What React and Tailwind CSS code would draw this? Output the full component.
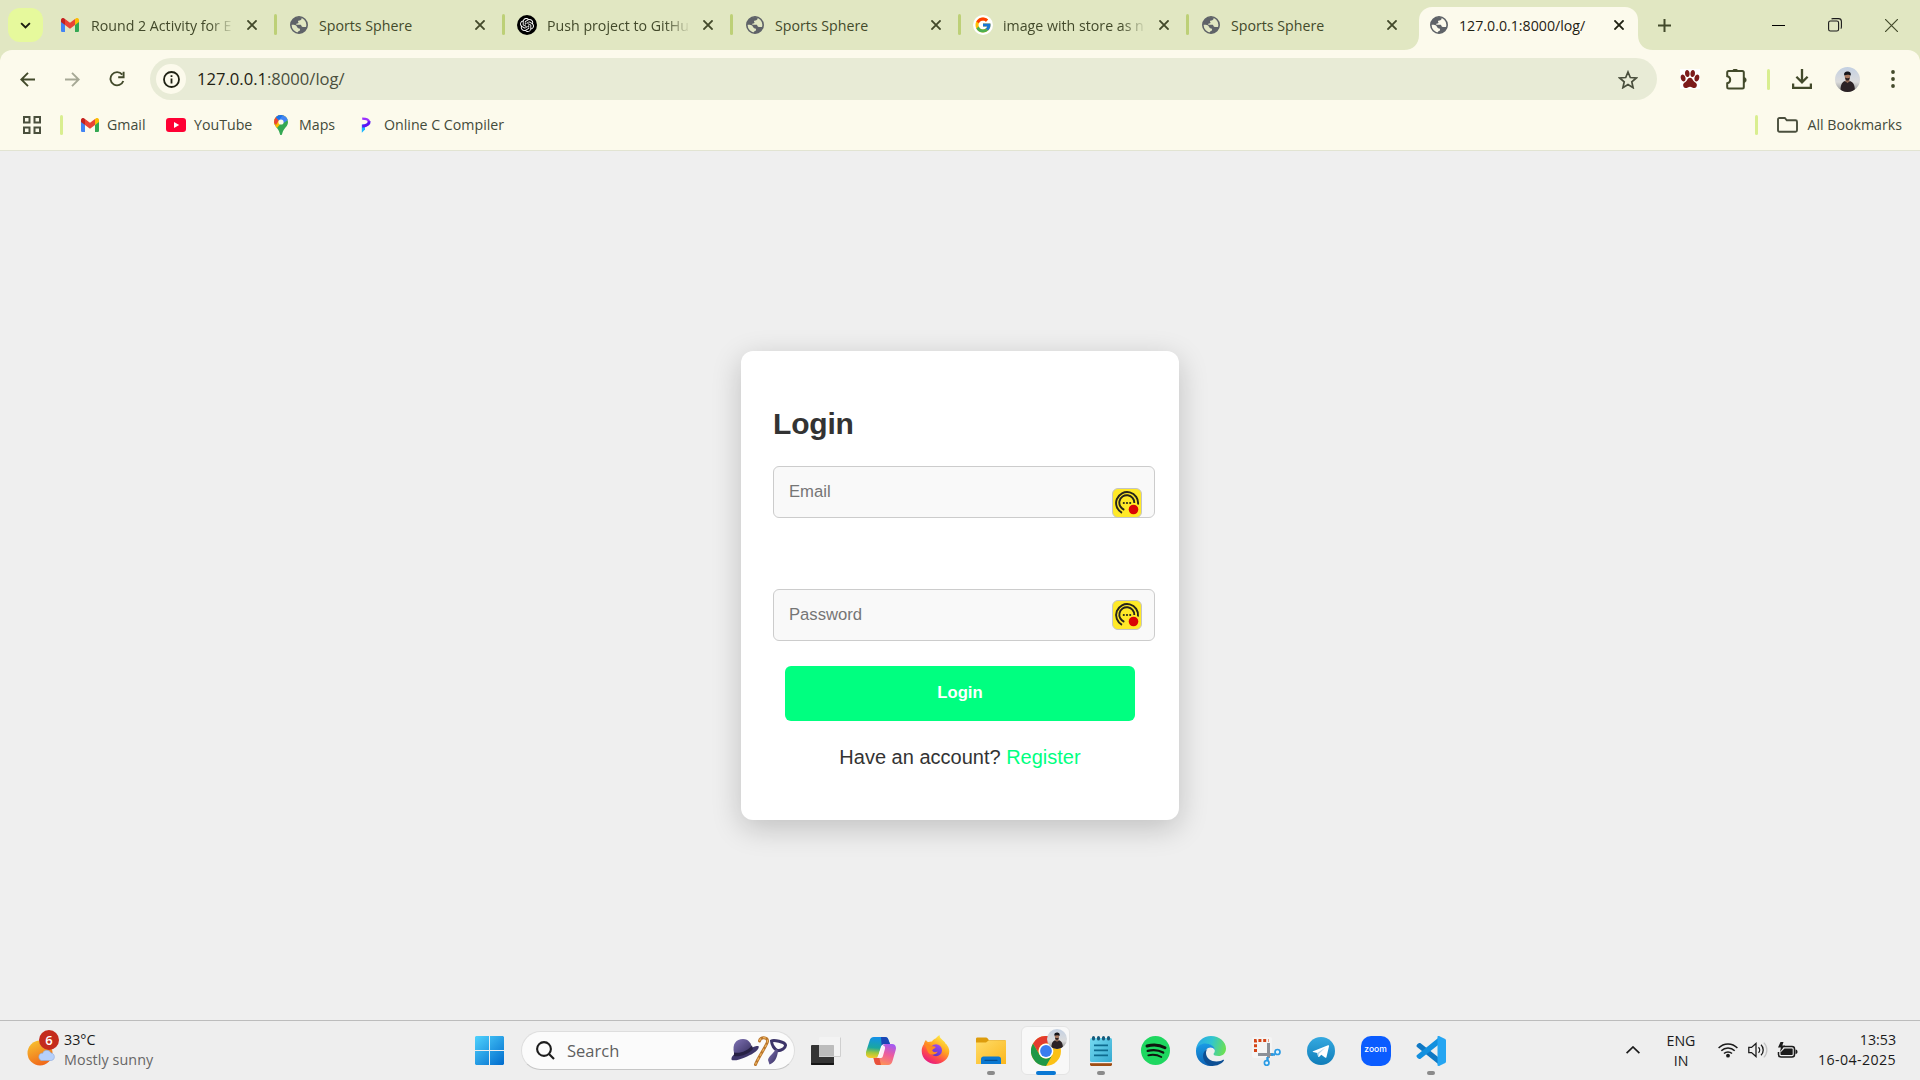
import React from "react";
import { FcGoogle } from "react-icons/fc";
import { SiOpenai } from "react-icons/si";
import { IoPaw } from "react-icons/io5";

const ui = "font-['Open_Sans','Noto_Sans',sans-serif]";

function Gmail({ className = "" }) {
  return (
    <svg viewBox="0 0 18 14" className={`h-[14px] w-[18px] ${className}`}>
      <path d="M0 2.5v10.2c0 .7.6 1.3 1.3 1.3H4V6.500Z" fill="#4285f4" />
      <path d="M18 2.500v10.200c0 .7-.6 1.300-1.300 1.300H14V6.500Z" fill="#34a853" />
      <path d="M14 1v6L18 4V2c0-1.800-2-2.600-3.300-1.600Z" fill="#fbbc04" />
      <path d="M4 7V1l5 3.800L14 1v6l-5 3.800Z" fill="#ea4335" />
      <path d="M0 2v2l4 3V1L3.300.4C2-.6 0 .2 0 2Z" fill="#c5221f" />
    </svg>
  );
}

function Globe({ className = "" }) {
  return (
    <svg viewBox="0 0 18 18" className={`size-[18px] ${className}`}>
      <circle cx="9" cy="9" r="8.200" fill="none" stroke="#5f6368" strokeWidth="1.600" />
      <path d="M1 8C1.500 4 5 1 9 1l2.600.600c.3 1.400-.3 2.200-1.300 2.600-.8.300-2 .2-2.300 1-.2.700.6.8.5 1.500-.2.900-1.700.5-2.200 1.200-.3.500.1.900.7.9h3.200c.9 0 1.200.7 1.400 1.500.2.600.9.700 1.600.7h3.600C16 14.500 13 17 9.500 17.200l-1.500-.3c-.2-1 .1-1.500 1-1.800 1-.3 1.200-1 1-1.800-.2-.8-1-.9-1.700-1.100-1-.3-1.200-1.600-2-2.400C5.300 8.800 3.500 8.600 1 8.800Z" fill="#5f6368" />
    </svg>
  );
}

function OpenAI() {
  return (
    <span className="flex size-5 items-center justify-center rounded-full bg-black">
      <SiOpenai className="size-[14px] text-white" />
    </span>
  );
}
function GoogleG() {
  return (
    <span className="flex size-5 items-center justify-center rounded-full bg-white">
      <FcGoogle className="size-[18px]" />
    </span>
  );
}

function Cross({ className = "" }) {
  return (
    <svg viewBox="0 0 10 10" className={`size-[10px] shrink-0 ${className}`} fill="none" stroke="currentColor" strokeWidth="1.900">
      <path d="M.4.400 9.600 9.600M9.600.400.4 9.600" />
    </svg>
  );
}

const tabs = [
  { icon: <Gmail className="-ml-[2px]" />, title: "Round 2 Activity for E", fade: true },
  { icon: <Globe />, title: "Sports Sphere" },
  { icon: <OpenAI />, title: "Push project to GitHu", fade: true },
  { icon: <Globe />, title: "Sports Sphere" },
  { icon: <GoogleG />, title: "image with store as n", fade: true },
  { icon: <Globe />, title: "Sports Sphere", last: true },
];

function Tab({ tab }) {
  return (
    <div className="relative flex h-[50px] w-[228px] shrink-0 items-center pl-3 pr-[20px]">
      <div className="flex w-5 shrink-0 items-center justify-center">{tab.icon}</div>
      <div
        className={`ml-[10px] mt-px w-[142px] overflow-hidden whitespace-nowrap text-[14.200px] leading-5 text-[#434a2b] ${
          tab.fade ? "[mask-image:linear-gradient(to_right,black_118px,transparent_144px)]" : ""
        }`}
      >
        {tab.title}
      </div>
      <Cross className="ml-auto text-[#434a2b]" />
      {!tab.last && <span className="absolute right-0 top-[14px] h-[21px] w-[3px] rounded-full bg-[#bdd077]" />}
    </div>
  );
}

function TabStrip() {
  return (
    <div className="flex h-[50px] items-center bg-[#e1e7c2] pl-2">
      <div className="flex h-[34px] w-[35px] shrink-0 items-center justify-center rounded-[12px] bg-[#e6f99c]">
        <svg viewBox="0 0 12 8" className="h-[7px] w-[11px]" fill="none" stroke="#1b1d10" strokeWidth="2.200">
          <path d="m1 1.300 5 5 5-5" />
        </svg>
      </div>
      <div className="ml-[6px] flex">
        {tabs.map((t, i) => (
          <Tab key={i} tab={t} />
        ))}
      </div>
      <div className="relative ml-[2px] flex h-[43px] w-[219px] shrink-0 items-center self-end rounded-t-[13px] bg-[#fcfaec] pb-[7px] pl-[11px] pr-[14px]">
        <svg viewBox="0 0 15 15" className="absolute -left-[15px] bottom-0 size-[15px]">
          <path d="M0 15h15V0C15 9 9 15 0 15Z" fill="#fcfaec" />
        </svg>
        <svg viewBox="0 0 15 15" className="absolute -right-[15px] bottom-0 size-[15px]">
          <path d="M15 15H0V0C0 9 6 15 15 15Z" fill="#fcfaec" />
        </svg>
        <Globe />
        <span className="ml-[11px] mt-px text-[14.200px] leading-5 text-[#1f2113]">127.0.0.1:8000/log/</span>
        <Cross className="ml-auto text-[#1f2113]" />
      </div>
      <svg viewBox="0 0 13 13" className="ml-[20px] size-[13px]" fill="none" stroke="#434a2b" strokeWidth="2">
        <path d="M6.500 0v13M0 6.500h13" />
      </svg>
      <div className="ml-auto flex items-center gap-[43px] pr-[22px]">
        <span className="h-px w-[13px] bg-black" />
        <svg viewBox="0 0 14 14" className="size-[14px]" fill="none" stroke="#1a1a1a" strokeWidth="1.100">
          <rect x=".6" y="3" width="10" height="10" rx="1.800" />
          <path d="M3.500 1.200c.4-.4.8-.6 1.500-.6h5.500c1.700 0 2.900 1.200 2.900 2.900V9c0 .7-.2 1.200-.6 1.600" />
        </svg>
        <svg viewBox="0 0 13 13" className="size-[13px]" fill="none" stroke="#434a2b" strokeWidth="1.200">
          <path d="m0 0 13 13M13 0 0 13" />
        </svg>
      </div>
    </div>
  );
}

function Avatar({ className = "" }) {
  return (
    <svg viewBox="0 0 25 25" className={className}>
      <defs>
        <linearGradient id="sky" x1="0" y1="0" x2="0" y2="1">
          <stop offset="0" stopColor="#c3d0e2" />
          <stop offset=".6" stopColor="#dcdcdc" />
          <stop offset="1" stopColor="#8c8f8e" />
        </linearGradient>
        <clipPath id="round"><circle cx="12.500" cy="12.500" r="12.500" /></clipPath>
      </defs>
      <g clipPath="url(#round)">
        <rect width="25" height="25" fill="url(#sky)" />
        <path d="M5.500 25c0-6 .7-9.500 4.500-10.900l2.500 1.200 2.500-1.200c4 1.400 5 5 5 10.900Z" fill="#2b2225" />
        <path d="M10.500 11h4v3.500l-2 1.500-2-1.500Z" fill="#8f6752" />
        <ellipse cx="12.400" cy="9.300" rx="2.700" ry="3.300" fill="#a97a61" />
        <path d="M9.300 8.500C8.500 5.500 10.500 4.500 12.500 4.500s4 1 3.200 4.200c-1-.9-4-1.300-6.400-.2Z" fill="#15151a" />
        <path d="M10 10.500c.4 2.500 1.400 3 2.400 3s2-.5 2.400-3c-1 .9-3.500.9-4.800 0Z" fill="#2b2225" />
      </g>
    </svg>
  );
}

function Toolbar() {
  return (
    <div className="bg-[#e1e7c2]">
      <div className="flex h-[58px] items-center rounded-t-[12px] bg-[#fcfaec] pl-5">
        <svg viewBox="0 0 15 15" className="size-[15px]" fill="none" stroke="#434a2b" strokeWidth="1.900">
          <path d="M15 7.500H1.500M8 .8 1.300 7.500 8 14.200" />
        </svg>
        <svg viewBox="0 0 15 15" className="ml-[30px] size-[15px]" fill="none" stroke="#a6a895" strokeWidth="1.900">
          <path d="M0 7.500h13.500M7 .8l6.700 6.700L7 14.200" />
        </svg>
        <svg viewBox="0 0 16 16" className="ml-[29px] size-4" fill="none" stroke="#434a2b" strokeWidth="1.900">
          <path d="M13.200 3.600A6.600 6.600 0 1 0 14.300 10M14.600.8v5.400H9.200" />
        </svg>
        <div className="ml-[25px] flex h-[42px] w-[1507px] items-center rounded-full bg-[#e8ebd6] pl-[6px] pr-[19px]">
          <span className="flex size-[30px] items-center justify-center rounded-full bg-[#fcfaec]">
            <svg viewBox="0 0 17 17" className="size-[17px]" fill="none" stroke="#1f2113" strokeWidth="1.800">
              <circle cx="8.500" cy="8.500" r="7.500" />
              <path d="M8.500 7.500v5M8.500 4.200v1.900" />
            </svg>
          </span>
          <span className="ml-[11px] mt-px text-[16.600px] text-[#1f2113]">
            127.0.0.1<span className="text-[#4a4f3d]">:8000/log/</span>
          </span>
          <svg viewBox="0 0 20 19" className="ml-auto h-[19px] w-5" fill="none" stroke="#4a4f3d" strokeWidth="1.700">
            <path d="m10 2 2.300 5.500 6 .5-4.500 3.900 1.300 5.800-5.100-3.100-5.100 3.100 1.300-5.800L1.700 8l6-.5Z" />
          </svg>
        </div>
        <span className="ml-[23px] flex size-5 items-center justify-center bg-white">
          <IoPaw className="size-5 scale-y-110 text-[#7c1a1c]" />
        </span>
        <svg viewBox="0 0 22 21" className="ml-[26px] h-[21px] w-[22px]" fill="none" stroke="#434a2b" strokeWidth="2">
          <path d="M1.200 3.500c0-.9.600-1.500 1.500-1.500h13.600c.9 0 1.500.6 1.500 1.500v14.400c0 .9-.6 1.500-1.500 1.500H2.700c-.9 0-1.500-.6-1.500-1.500v-3.700c2-.4 3-1.800 3-3.500s-1-3-3-3.400Z" />
          <path d="M6.800 2a2.400 2.200 0 0 1 4.800 0ZM18 8.600a2.200 2.400 0 0 1 0 4.800Z" fill="#434a2b" strokeWidth=".8" />
        </svg>
        <span className="ml-[19px] h-[21px] w-[3px] rounded-full bg-[#d9ee90]" />
        <svg viewBox="0 0 20 20" className="ml-[22px] size-5" fill="none" stroke="#434a2b" strokeWidth="2.300">
          <path d="M10 0v13M4.400 7.800 10 13.400l5.600-5.600M1.100 14.500v4.300h17.800v-4.300" />
        </svg>
        <Avatar className="ml-[23px] size-[25px]" />
        <svg viewBox="0 0 4 18" className="ml-[31px] h-[18px] w-1" fill="#434a2b">
          <circle cx="2" cy="2" r="1.900" />
          <circle cx="2" cy="9" r="1.900" />
          <circle cx="2" cy="16" r="1.900" />
        </svg>
      </div>
    </div>
  );
}

function BookmarkBar() {
  return (
    <div className="flex h-[43px] items-center border-b border-[#e2e4d2] bg-[#fcfaec] pb-[8px] pl-[23px] text-[14.200px] text-[#434a3a]">
      <svg viewBox="0 0 18 18" className="size-[18px]" fill="none" stroke="#4a4f3d" strokeWidth="2">
        <path d="M1 1h5.500v5.500H1ZM11.500 1H17v5.500h-5.500ZM1 11.500h5.500V17H1ZM11.500 11.500H17V17h-5.500Z" />
      </svg>
      <span className="ml-[19px] h-5 w-[3px] rounded-full bg-[#d9ee90]" />
      <Gmail className="ml-[18px]" />
      <span className="ml-[8px] w-[58px]">Gmail</span>
      <svg viewBox="0 0 20 14" className="ml-px h-[14px] w-5">
        <rect width="20" height="14" rx="3" fill="#ff0033" />
        <path d="m8 4 5.200 3L8 10Z" fill="#fff" />
      </svg>
      <span className="ml-[8px] w-[80px]">YouTube</span>
      <svg viewBox="0 0 14 20" className="h-5 w-[14px]">
        <defs>
          <clipPath id="pin"><path d="M7 0a7 7 0 0 1 7 7c0 4.500-4.200 6-5.600 11-.4 1.800-.7 2-1.400 2s-1-.3-1.400-2C4.500 13 0 11.300 0 7a7 7 0 0 1 7-7Z" /></clipPath>
        </defs>
        <g clipPath="url(#pin)">
          <rect width="14" height="20" fill="#34a853" />
          <path d="M0 0h14L3 13 0 14Z" fill="#fbbc04" />
          <path d="M0 0h8L2 10 0 8Z" fill="#ea4335" />
          <path d="M2 0h12v5L8 9 2 2.500Z" fill="#4285f4" />
          <path d="M2 2.500 4 0h5L5 5Z" fill="#1a73e8" />
        </g>
        <circle cx="7" cy="7" r="2.600" fill="#fcfaec" />
      </svg>
      <span className="ml-[11px] w-[62px]">Maps</span>
      <svg viewBox="0 0 10 16" className="h-4 w-[10px]">
        <path d="M.8 7.500h3.200v5L.8 15.800Z" fill="#19b5ff" />
        <path d="M1.200 1.600c4 0 6.600 1.200 6.900 3.300" fill="none" stroke="#9b30ff" strokeWidth="2.400" />
        <path d="M8.200 4.300C8.300 7 6 8.700 1.200 9.200" fill="none" stroke="#5a14f5" strokeWidth="2.900" />
      </svg>
      <span className="ml-[13px]">Online C Compiler</span>
      <div className="ml-auto flex items-center pr-[18px]">
        <span className="h-5 w-[3px] rounded-full bg-[#d9ee90]" />
        <svg viewBox="0 0 21 16" className="ml-[19px] h-4 w-[21px]" fill="none" stroke="#4a4f3d" strokeWidth="1.900">
          <path d="M1 2.500C1 1.600 1.600 1 2.500 1h5.300l2 2.300h8.700c.9 0 1.500.6 1.500 1.500v8.500c0 .9-.6 1.500-1.500 1.500h-16c-.9 0-1.500-.6-1.500-1.500Z" />
        </svg>
        <span className="ml-[9px]">All Bookmarks</span>
      </div>
    </div>
  );
}

function FillBadge() {
  return (
    <svg viewBox="0 0 30 30" className="block size-[30px]">
      <rect x=".5" y=".5" width="29" height="29" rx="5.500" fill="#ffe928" stroke="#c4c4c4" />
      <g fill="none" stroke="#26241c" strokeWidth="1.900">
        <path d="M26 16.500A11 11 0 1 0 10 24.800" />
        <path d="M22.300 15A7.500 7.500 0 1 0 12.300 21.800" />
      </g>
      <g fill="#26241c">
        <circle cx="11.800" cy="15" r="1.100" />
        <circle cx="15" cy="15" r="1.100" />
        <circle cx="18.200" cy="15" r="1.100" />
      </g>
      <circle cx="21.500" cy="21.500" r="4.800" fill="#d90404" />
    </svg>
  );
}

function Page() {
  return (
    <main className="flex flex-1 justify-center bg-[#efefef] pt-[200px] font-['Liberation_Sans',Arial,sans-serif] text-[#333]">
      <form className="h-[469px] w-[438px] rounded-[12px] bg-white px-8 pt-[54px] shadow-[0_8px_30px_rgba(0,0,0,0.2)]">
        <h1 className="text-[30px] font-bold leading-[38px] tracking-[-0.2px]">Login</h1>
        <div className="relative mt-[23px] w-[382px]">
          <input
            placeholder="Email"
            className="block h-[52px] w-full rounded-[6px] border border-[#ccc] bg-[#f9f9f9] px-[15px] text-[16.670px] placeholder:text-[#757575]"
          />
          <span className="absolute bottom-0 right-[13px]"><FillBadge /></span>
        </div>
        <div className="relative mt-[71px] w-[382px]">
          <input
            type="password"
            placeholder="Password"
            className="block h-[52px] w-full rounded-[6px] border border-[#ccc] bg-[#f9f9f9] px-[15px] text-[16.670px] placeholder:text-[#757575]"
          />
          <span className="absolute right-[13px] top-[11px]"><FillBadge /></span>
        </div>
        <button type="button" className="mx-3 mt-[25px] block h-[55px] w-[350px] rounded-[6px] bg-[#00ff80] pb-[2px] text-[16.670px] font-bold text-white">
          Login
        </button>
        <p className="mt-[24px] text-center text-[20px] leading-6">
          Have an account? <a className="text-[#00ff80]">Register</a>
        </p>
      </form>
    </main>
  );
}

function Windows() {
  return (
    <svg viewBox="0 0 29 29" className="size-[29px]">
      <defs>
        <linearGradient id="win" gradientUnits="userSpaceOnUse" x1="0" y1="0" x2="26" y2="29">
          <stop offset="0" stopColor="#4fd2fd" />
          <stop offset="1" stopColor="#0470cf" />
        </linearGradient>
      </defs>
      <path d="M1 0h13v14H0V1ZM15 0h13l1 1v13H15ZM0 15h14v14H1l-1-1ZM15 15h14v13l-1 1H15Z" fill="url(#win)" />
    </svg>
  );
}

function SearchBox() {
  return (
    <div className="flex h-[39px] w-[274px] items-center rounded-full border border-[#dedede] border-b-[#c6c6c6] bg-[#fbfbfb] pl-[14px] pr-[7px]">
      <svg viewBox="0 0 19 19" className="size-[19px]" fill="none" stroke="#1c1c1c" strokeWidth="2.100">
        <circle cx="8" cy="8" r="6.900" />
        <path d="m13 13 5 5" />
      </svg>
      <span className="ml-3 mt-px text-[16.500px] text-[#5f5f5f]">Search</span>
      <svg viewBox="0 0 56 30" className="ml-auto h-[30px] w-[56px]">
        <defs>
          <linearGradient id="hat" x1="0" y1="0" x2="1" y2="1">
            <stop offset="0" stopColor="#8073b5" />
            <stop offset="1" stopColor="#342d5c" />
          </linearGradient>
        </defs>
        <path d="M.5 23.500C0 21 3 18 5.500 16.500l17-5.500c3.500-1.500 5.500-1.300 5.300 0-.3 4-8 8-14 10.500-5 2.200-12 4-13.300 2Z" fill="#3f376b" />
        <path d="M3 17C1 8 5 3 12 3c6 0 8 4.500 9.500 9.500-3 5-13 9-18.500 4.500Z" fill="url(#hat)" />
        <path d="M3 16.500c6 1.500 14-2 18-7l1 3.500c-4 5-14 8.500-19 7Z" fill="#272144" />
        <path d="M28.500 5c.5-4.500 8.500-4.500 8 .5-.2 3-9.500 16.500-12 23" fill="none" stroke="#b9752b" strokeWidth="3" strokeLinecap="round" />
        <path d="M28.500 5c.5-4.500 8.500-4.500 8 .5-.2 3-9.500 16.500-12 23" fill="none" stroke="#edb45f" strokeWidth="1.200" strokeDasharray="3 2" />
        <path d="M40.500 5c2-1.500 13.500.8 14 4 .2 3-4 5.500-8 5.700-3-1.300-5.800-5.700-6-9.700Z" fill="none" stroke="#3c3468" strokeWidth="3" />
        <path d="M45 13c-3 5-7.500 7.500-8 11l1.500 4.500c4.500-1.500 8-6 8.500-14Z" fill="url(#hat)" />
      </svg>
    </div>
  );
}

function TaskView() {
  return (
    <svg viewBox="0 0 30 30" className="size-[30px]">
      <rect y="9" width="23" height="20" rx="1" fill="#343434" />
      <path d="M0 27h23v1.500l-1 .5H1l-1-.5Z" fill="#151515" />
      <rect x="8" y="1" width="22" height="20" rx="1" fill="#f4f4f4" opacity=".8" />
      <path d="M8 9h15v12H8Z" fill="#8a8a8a" opacity=".25" />
      <path d="M8 20.500h21.500V1.500" fill="none" stroke="#cfcfcf" />
    </svg>
  );
}

function Copilot() {
  return (
    <svg viewBox="0 0 30 28" className="h-[28px] w-[30px]">
      <defs>
        <linearGradient id="cpA" x1=".3" y1="0" x2=".2" y2="1">
          <stop offset="0" stopColor="#1390e8" />
          <stop offset=".5" stopColor="#1aa7a0" />
          <stop offset=".75" stopColor="#a4c83a" />
          <stop offset="1" stopColor="#ffca28" />
        </linearGradient>
        <linearGradient id="cpB" x1=".7" y1="0" x2=".3" y2="1">
          <stop offset="0" stopColor="#a55af0" />
          <stop offset=".45" stopColor="#ee5c9c" />
          <stop offset="1" stopColor="#ff9750" />
        </linearGradient>
      </defs>
      <path d="M8 0h11c2 0 3 1 3.500 3L24 7h-5c-2 0-3.400 1-4 3l-2.500 8c-.7 2-1.500 3-4 3H4c-3 0-5-2.500-4-6L3.500 4C4.200 1.500 5.500 0 8 0Z" fill="url(#cpA)" />
      <path d="M15 0h4c2 0 3 1 3.500 3L24 7h-5c-1.600 0-2.600.7-3.300 2Z" fill="#1b46b5" />
      <path d="M22 28H12c-2 0-3-1-3.500-3l-1-4h2c2 0 3.400-1 4-3l2.500-8c.7-2 1.500-3 4-3h6c3 0 4.700 2.500 3.700 6l-3.200 11c-.7 2.500-2 4-4.500 4Z" fill="url(#cpB)" />
      <path d="M15 28h-3c-2 0-3-1-3.500-3l-1-4h2c1.600 0 2.600-.7 3.300-2Z" fill="#e8503c" />
      <path d="M17 8.500c.5-1 1-1.500 3-1.500h-1c-2 0-3.400 1-4 3l-2.500 8c-.5 1.500-1 2.500-2 3h4.500c1 0 1.600-1 2-2.300l2-7c.4-1.700-.4-3.200-2-3.200Z" fill="#fff" opacity=".9" />
    </svg>
  );
}

function Firefox() {
  return (
    <svg viewBox="0 0 29 29" className="mb-[2px] size-[29px]">
      <defs>
        <linearGradient id="ff" x1=".8" y1=".05" x2=".25" y2="1">
          <stop offset="0" stopColor="#fff14a" />
          <stop offset=".4" stopColor="#ffa51f" />
          <stop offset=".7" stopColor="#ff4b4b" />
          <stop offset="1" stopColor="#e31587" />
        </linearGradient>
        <linearGradient id="ffp" x1=".7" y1="0" x2=".3" y2="1">
          <stop offset="0" stopColor="#a04af0" />
          <stop offset="1" stopColor="#5b35c9" />
        </linearGradient>
      </defs>
      <path d="M5 5c.4 1.200 1.500 1.900 2.300 2.100C9 6.600 10 6.400 11 6.600c1-1.800 2.500-2.800 4-3.300C16 1.800 17 .8 18.500 0c0 3.200 2.500 4.300 4.600 6.500.7.700 1.200 1.500 1.500 2.300.7.300 1.400 1 1.900 2.200.7.600 1.500 2.500 1.800 5C28.300 23.500 22 29 14.500 29S.7 23.500.7 16c0-3 .8-5 2.300-7C3.300 7.300 4 6 5 5Z" fill="url(#ff)" />
      <circle cx="15" cy="15.300" r="6" fill="url(#ffp)" />
      <path d="M3 9c3-1.200 6 .4 7.500 2.200 1.500 0 3.500-.2 4.300.8-.5 1.500-3.200 2-3.600 3.300.6 2 3 2.300 5.500 1.300-1 3.500-7 4.300-9.500.8C5.500 14.900 5.500 11 3 9Z" fill="#ff8a20" />
    </svg>
  );
}

function Explorer() {
  return (
    <svg viewBox="0 0 30 28" className="h-[28px] w-[30px]">
      <defs>
        <linearGradient id="fold" x1="0" y1="0" x2="1" y2="1">
          <stop offset="0" stopColor="#ffdc68" />
          <stop offset="1" stopColor="#fbb71d" />
        </linearGradient>
      </defs>
      <path d="M0 2C0 1 .5.500 1.500.500h8c1 0 1.600.3 2.200 1L13 3.300h15.500c1 0 1.500.5 1.500 1.500V8H0Z" fill="#dd9c0c" />
      <path d="M0 5.500h10l2.500-2H30V27H0Z" fill="url(#fold)" />
      <path d="M5 27v-5c0-1.500 1-2.500 2.500-2.500h15c1.500 0 2.500 1 2.500 2.500v5Z" fill="#0a78d1" />
      <path d="M9 23.300h12" stroke="#064f91" strokeWidth="1.300" strokeLinecap="round" />
    </svg>
  );
}

function Chrome() {
  return (
    <svg viewBox="0 0 30 30" className="size-[30px]">
      <circle cx="15" cy="15" r="15" fill="#fbc116" />
      <path d="M2 7.500A15 15 0 0 1 28 7.500H15a7.500 7.500 0 0 0-6.500 11.300Z" fill="#e33b2e" />
      <path d="M2 7.500 8.500 18.700A7.500 7.500 0 0 0 21.500 18.700L15 30A15 15 0 0 1 2 7.500Z" fill="#1f9847" />
      <circle cx="15" cy="15" r="7.400" fill="#fff" />
      <circle cx="15" cy="15" r="5.900" fill="#3a7def" />
    </svg>
  );
}

function Notepad() {
  return (
    <svg viewBox="0 0 22 30" className="h-[30px] w-[22px]">
      <defs>
        <linearGradient id="note" x1="0" y1="0" x2="1" y2="1">
          <stop offset="0" stopColor="#76dbf2" />
          <stop offset="1" stopColor="#35a9d0" />
        </linearGradient>
      </defs>
      <path d="M0 25h22v4l-1 1H1l-1-1Z" fill="#a04d13" />
      <path d="M0 25h22v2.200H0Z" fill="#f0f0f0" />
      <rect y="2" width="22" height="24" rx="1.500" fill="url(#note)" />
      <path d="M4 9.300h14M4 14.300h14M4 19.300h14" stroke="#0e6b8f" strokeWidth="1.800" />
      <path d="M3.500 1.500v1.500M8.500 1.500v1.500M13.500 1.500v1.500M18.500 1.500v1.500" stroke="#155a7c" strokeWidth="3" strokeLinecap="round" />
    </svg>
  );
}

function Spotify() {
  return (
    <svg viewBox="0 0 29 29" className="size-[29px]">
      <circle cx="14.500" cy="14.500" r="14.500" fill="#1ed760" />
      <g fill="none" stroke="#10150f" strokeLinecap="round">
        <path d="M6 10c6-1.700 13-1.100 18 1.800" strokeWidth="2.900" />
        <path d="M6.700 14.900c5-1.400 11-.9 15.500 1.700" strokeWidth="2.300" />
        <path d="M7.300 19.300c4.500-1 9-.6 13 1.700" strokeWidth="1.800" />
      </g>
    </svg>
  );
}

function Edge() {
  return (
    <svg viewBox="0 0 30 30" className="size-[30px]">
      <defs>
        <linearGradient id="edA" x1="0" y1=".3" x2="1" y2=".5">
          <stop offset="0" stopColor="#2aa7e8" />
          <stop offset=".5" stopColor="#31c5cf" />
          <stop offset="1" stopColor="#6be053" />
        </linearGradient>
        <linearGradient id="edB" x1=".4" y1="0" x2=".5" y2="1">
          <stop offset="0" stopColor="#1a9be5" />
          <stop offset="1" stopColor="#0d62b5" />
        </linearGradient>
      </defs>
      <path d="M0 14C.5 6 7 0 15 0c8.500 0 15 6 15 12.500C30 17.500 26.500 20 22.500 20c-3.500 0-5-1-5-2 0-.7 1.300-1.200 1.300-3.300C18.800 11 14.500 8 9.500 8 5.500 8 2 10.500 0 14Z" fill="url(#edA)" />
      <path d="M0 14c1-4 5-6.500 9.500-6.500 5 0 9.300 3 9.300 6.500-1-1.700-2.500-2.500-4.300-2.500-3.500 0-6 3-6 7 0 5 4 9.500 9 11.200C8 31.300 0 24.500 0 15.500Z" fill="url(#edB)" />
      <path d="M11.500 13c-1 1-1.500 2.500-1.500 4 0 5 5 8.500 10.500 8.500 3 0 5-.8 6.500-1.700.8-.4 1.300.2.800 1C25.500 28 21 30 16.500 30 11.500 30 7 25 7 20c0-3 1.700-6 4.500-7Z" fill="#0d4f94" />
    </svg>
  );
}

function Snip() {
  return (
    <svg viewBox="0 0 30 30" className="size-[30px]">
      <rect x="1" y="1" width="20" height="21" rx="2" fill="#fff" opacity=".35" />
      <path d="M4.500 16V4.500h13" fill="none" stroke="#d64415" strokeWidth="3" strokeDasharray="3 1.800" />
      <path d="M7 18.500h15M17.500 7v15" stroke="#8c9097" strokeWidth="3" />
      <path d="M20 18.500h4M16.500 21v4" stroke="#2b9be4" strokeWidth="2.400" />
      <circle cx="26.500" cy="16" r="2.500" fill="#e8f4fc" stroke="#2b9be4" strokeWidth="1.700" />
      <circle cx="15.700" cy="27" r="2.300" fill="#e8f4fc" stroke="#2b9be4" strokeWidth="1.700" />
    </svg>
  );
}

function Telegram() {
  return (
    <svg viewBox="0 0 28 28" className="size-[28px]">
      <defs>
        <linearGradient id="tg" x1="0" y1="0" x2="0" y2="1">
          <stop offset="0" stopColor="#35a9e0" />
          <stop offset="1" stopColor="#107db9" />
        </linearGradient>
      </defs>
      <circle cx="14" cy="14" r="14" fill="url(#tg)" />
      <path d="M6 14.200 21 8.300c.7-.3 1.200.2 1 1L19.500 20c-.2.900-.8 1.100-1.500.6l-3.700-2.800-2 1.900c-.5.500-1.200.3-1.300-.5L10.300 16 6 14.900c-.5-.2-.5-.5 0-.7Z" fill="#fff" />
      <path d="m10.300 16 8.200-5.500-6.500 6.300-.4 3c-.4 0-.5-.3-.6-.7Z" fill="#b4d5e8" />
    </svg>
  );
}

function Zoom() {
  return (
    <span className="flex size-[30px] items-center justify-center rounded-[10px] bg-[#0b5cff] pb-[2px] font-['Inter',sans-serif] text-[8.500px] font-medium leading-none text-white">
      zoom
    </span>
  );
}

function Code() {
  return (
    <svg viewBox="0 0 30 30" className="size-[30px]">
      <path d="m1.500 8 1.600-.9c.6-.3 1-.2 1.500.2L24 22.500V29.500L1 11c-.7-.5-.6-1.500-.2-2Z" fill="#0f78c4" />
      <path d="m1.500 22 1.600.9c.6.300 1 .2 1.500-.2L24 7.500V.5L1 19c-.7.500-.6 1.500-.2 2Z" fill="#1390df" />
      <path d="M21.500.5c.6-.5 1.200-.5 2-.2l5.200 2.500c.8.400 1.300 1 1.300 2v20.400c0 1-.5 1.600-1.300 2l-5.200 2.500c-.8.300-1.400.3-2-.2Z" fill="#25a5f2" />
    </svg>
  );
}

const apps = [
  { icon: <TaskView /> },
  { icon: <Copilot /> },
  { icon: <Firefox /> },
  { icon: <Explorer />, open: true },
  { icon: <Chrome />, active: true },
  { icon: <Notepad />, open: true },
  { icon: <Spotify /> },
  { icon: <Edge /> },
  { icon: <Snip /> },
  { icon: <Telegram /> },
  { icon: <Zoom /> },
  { icon: <Code />, open: true },
];

function Tray() {
  return (
    <div className="ml-auto flex items-center pb-px pr-6 text-[14.200px] leading-5 text-[#1b1b1b]">
      <svg viewBox="0 0 14 8" className="h-2 w-[14px]" fill="none" stroke="#1b1b1b" strokeWidth="1.700">
        <path d="M.6 7.200 7 1l6.400 6.200" />
      </svg>
      <div className="ml-[25px] w-[32px] pt-px text-center">ENG<br />IN</div>
      <svg viewBox="0 0 20 16" className="ml-[21px] h-4 w-5" fill="none" stroke="#1b1b1b" strokeWidth="1.500">
        <path d="M.6 6a13 13 0 0 1 18.800 0M3.300 8.800a9.400 9.400 0 0 1 13.400 0M6 11.600a5.600 5.600 0 0 1 8 0" />
        <circle cx="10" cy="13.700" r="1.900" fill="#1b1b1b" stroke="none" />
      </svg>
      <svg viewBox="0 0 20 16" className="ml-[10px] h-4 w-5" fill="none" stroke="#1b1b1b" strokeWidth="1.300">
        <path d="M.8 5.400h2.700L8 1.500v13l-4.500-3.900H.8Z" />
        <path d="M10.500 5.200a4 4 0 0 1 0 5.600M13 2.800a7.200 7.200 0 0 1 0 10.400" />
        <path d="M15.800.6a10.500 10.500 0 0 1 0 14.800" stroke="#c2c2c2" />
      </svg>
      <svg viewBox="0 0 21 17" className="ml-[9px] h-[17px] w-[21px]">
        <path d="M7 4.500h8c1.500 0 2.500 1 2.500 2.500v5.500c0 1.500-1 2.500-2.500 2.500H4c-1.500 0-2.500-1-2.500-2.500V10" fill="none" stroke="#1b1b1b" strokeWidth="1.500" />
        <path d="M7.500 6.500h7.200c.6 0 1 .4 1 1V12c0 .6-.4 1-1 1H4.500c-.6 0-1-.4-1-1v-1.500Z" fill="#1b1b1b" />
        <path d="M18.500 7.500c1.500.2 2 .9 2 2.300s-.5 2-2 2.200ZM3.500 0h3L5.300 3.500H8L3 10l.9-4.500H1Z" fill="#1b1b1b" />
      </svg>
      <div className="ml-[19px] w-[79px] whitespace-nowrap text-right">13:53<br /><span className="tracking-[0.400px]">16-04-2025</span></div>
    </div>
  );
}

function Taskbar() {
  return (
    <footer className="flex h-[60px] items-center border-t border-[#bcbcbc] bg-[#eee]">
      <div className="flex w-[475px] shrink-0 items-center pl-[27px]">
        <div className="relative -mt-[3px] h-[36px] w-[32px]">
          <svg viewBox="0 0 32 36" className="h-[36px] w-[32px]">
            <defs>
              <linearGradient id="sun" x1=".2" y1="0" x2=".6" y2="1">
                <stop offset="0" stopColor="#f7c22f" />
                <stop offset="1" stopColor="#f0661a" />
              </linearGradient>
            </defs>
            <circle cx="13" cy="22" r="12.500" fill="url(#sun)" />
            <path d="M14 29.500a4 4 0 0 1-.3-7c1-.4 1.300-.4 2-.3 1-3.500 6.500-4 8.300-.2 4 .2 4.800 6.700.5 7.500Z" fill="#b6d0fb" stroke="#8aa9de" strokeWidth=".6" />
          </svg>
          <span className="absolute -top-[1px] left-[12px] flex size-5 items-center justify-center rounded-full bg-[#c42b1c] text-[13px] font-semibold leading-none text-white">6</span>
        </div>
        <div className="ml-[5px] pb-[2px] text-[14.300px] leading-5 text-[#1b1b1b]">
          33°C<br /><span className="tracking-[0.100px] text-[#666]">Mostly sunny</span>
        </div>
      </div>
      <Windows />
      <div className="ml-[17px]"><SearchBox /></div>
      <div className="ml-[3px] flex">
        {apps.map((a, i) => (
          <div key={i} className="flex w-[55px] justify-center">
            <div className={`relative flex size-[49px] items-center justify-center rounded-[6px] ${a.active ? "border border-[#e4e4e4] bg-[#f8f8f8]" : ""}`}>
              {a.icon}
              {a.open && <span className="absolute bottom-0 left-[21px] h-1 w-2 rounded-full bg-[#8a8a8a]" />}
              {a.active && <span className="absolute -bottom-px left-[14px] h-1 w-5 rounded-full bg-[#0a78d4]" />}
              {a.active && <Avatar className="absolute right-[2px] top-[2px] size-5" />}
            </div>
          </div>
        ))}
      </div>
      <Tray />
    </footer>
  );
}

export default function App() {
  return (
    <div className={`flex h-[1080px] w-[1920px] flex-col overflow-hidden ${ui}`}>
      <TabStrip />
      <Toolbar />
      <BookmarkBar />
      <Page />
      <Taskbar />
    </div>
  );
}
